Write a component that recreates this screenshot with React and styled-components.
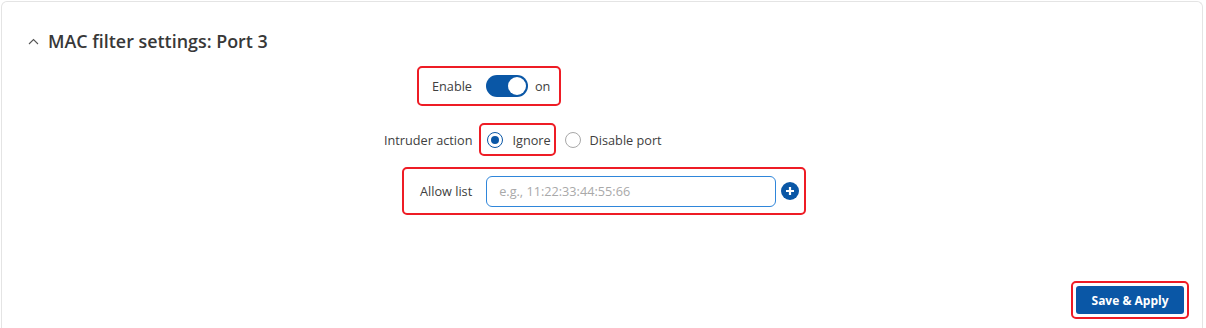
import React from "react";
import styled, { createGlobalStyle } from "styled-components";

const Global = createGlobalStyle`
  html, body { margin: 0; padding: 0; background: #fff; }
  body { font-family: "Open Sans", "Noto Sans", sans-serif; color: #404040; }
  * { box-sizing: border-box; }
`;

const Card = styled.section`
  margin: 1px 3px 0 1px;
  min-height: 340px;
  border: 1px solid #e4e4e4;
  border-bottom: none;
  border-radius: 6px 6px 0 0;
  padding: 27px 13px 0 26px;
  display: flex;
  flex-direction: column;
`;

const Header = styled.div`
  display: flex;
  align-items: center;
  gap: 9px;
  height: 24px;
`;

const Title = styled.h2`
  margin: 0;
  font-size: 17.9px;
  font-weight: 600;
  color: #383838;
  line-height: 24px;
`;

const Form = styled.div`
  display: flex;
  flex-direction: column;
`;

const Row = styled.div`
  display: flex;
  align-items: center;
  margin-left: ${(p) => p.$indent}px;
  margin-top: ${(p) => p.$top}px;
  height: ${(p) => p.$height}px;
`;

const Highlight = styled.div`
  display: flex;
  align-items: center;
  height: 100%;
  border: 2px solid #ee1c25;
  border-radius: 5px;
  padding: ${(p) => p.$pad};
`;

const Label = styled.span`
  font-size: 12.7px;
  color: #404040;
  margin-right: ${(p) => p.$gap}px;
  white-space: nowrap;
`;

const OptionText = styled.span`
  font-size: 12.7px;
  color: #404040;
  white-space: nowrap;
`;

const Toggle = styled.span`
  width: 42px;
  height: 22px;
  border-radius: 11px;
  background: #0a57a6;
  position: relative;
  margin-right: 7px;
  flex: none;
  &::after {
    content: "";
    position: absolute;
    right: 2px;
    top: 2px;
    width: 18px;
    height: 18px;
    border-radius: 50%;
    background: #fff;
  }
`;

const Radio = styled.span`
  width: 16px;
  height: 16px;
  border-radius: 50%;
  border: 1px solid ${(p) => (p.$checked ? "#0a57a6" : "#a8a8a8")};
  background: #fff;
  position: relative;
  flex: none;
  margin-right: 9px;
  &::after {
    content: "";
    display: ${(p) => (p.$checked ? "block" : "none")};
    position: absolute;
    left: 3px;
    top: 3px;
    width: 8px;
    height: 8px;
    border-radius: 50%;
    background: #0a57a6;
  }
`;

const Option = styled.label`
  display: flex;
  align-items: center;
  margin-left: ${(p) => p.$offset || 0}px;
`;

const Input = styled.input`
  width: 290px;
  height: 31px;
  border: 1px solid #2f86da;
  border-radius: 6px;
  padding: 0 12px;
  font-family: "Open Sans", "Noto Sans", sans-serif;
  font-size: 12.7px;
  color: #404040;
  outline: none;
  margin-right: 5px;
  &::placeholder { color: #a9a9a9; }
`;

const AddButton = styled.button`
  width: 18px;
  height: 18px;
  padding: 0;
  border: none;
  border-radius: 50%;
  background: #0a57a6;
  display: flex;
  align-items: center;
  justify-content: center;
`;

const Footer = styled.div`
  display: flex;
  justify-content: flex-end;
  margin-top: 66px;
`;

const ButtonFrame = styled.div`
  border: 2px solid #ee1c25;
  border-radius: 5px;
  padding: 3px;
`;

const PrimaryButton = styled.button`
  width: 108px;
  height: 28px;
  border: none;
  border-radius: 3px;
  background: #0a57a6;
  color: #fff;
  font-family: "Open Sans", "Noto Sans", sans-serif;
  font-size: 12px;
  font-weight: 700;
  display: block;
`;

export default function App() {
  return (
    <>
      <Global />
      <Card>
        <Header>
          <svg width="11" height="7" viewBox="0 0 11 7" fill="none">
            <path d="M1 6 L5.5 1.5 L10 6" stroke="#555" strokeWidth="1.1" />
          </svg>
          <Title>MAC filter settings: Port 3</Title>
        </Header>
        <Form>
          <Row $indent={389} $top={13} $height={40}>
            <Highlight $pad="0 9px 0 13px">
              <Label $gap={14}>Enable</Label>
              <Toggle />
              <OptionText>on</OptionText>
            </Highlight>
          </Row>
          <Row $indent={356} $top={17} $height={33}>
            <Label $gap={7}>Intruder action</Label>
            <Highlight $pad="0 3px 0 6px">
              <Option>
                <Radio $checked />
                <OptionText>Ignore</OptionText>
              </Option>
            </Highlight>
            <Option $offset={9}>
              <Radio />
              <OptionText>Disable port</OptionText>
            </Option>
          </Row>
          <Row $indent={374} $top={11} $height={48}>
            <Highlight $pad="0 5px 0 16px">
              <Label $gap={14}>Allow list</Label>
              <Input placeholder="e.g., 11:22:33:44:55:66" />
              <AddButton aria-label="Add">
                <svg width="10" height="10" viewBox="0 0 10 10">
                  <path d="M5 1 V9 M1 5 H9" stroke="#fff" strokeWidth="2.2" />
                </svg>
              </AddButton>
            </Highlight>
          </Row>
        </Form>
        <Footer>
          <ButtonFrame>
            <PrimaryButton>Save &amp; Apply</PrimaryButton>
          </ButtonFrame>
        </Footer>
      </Card>
    </>
  );
}
